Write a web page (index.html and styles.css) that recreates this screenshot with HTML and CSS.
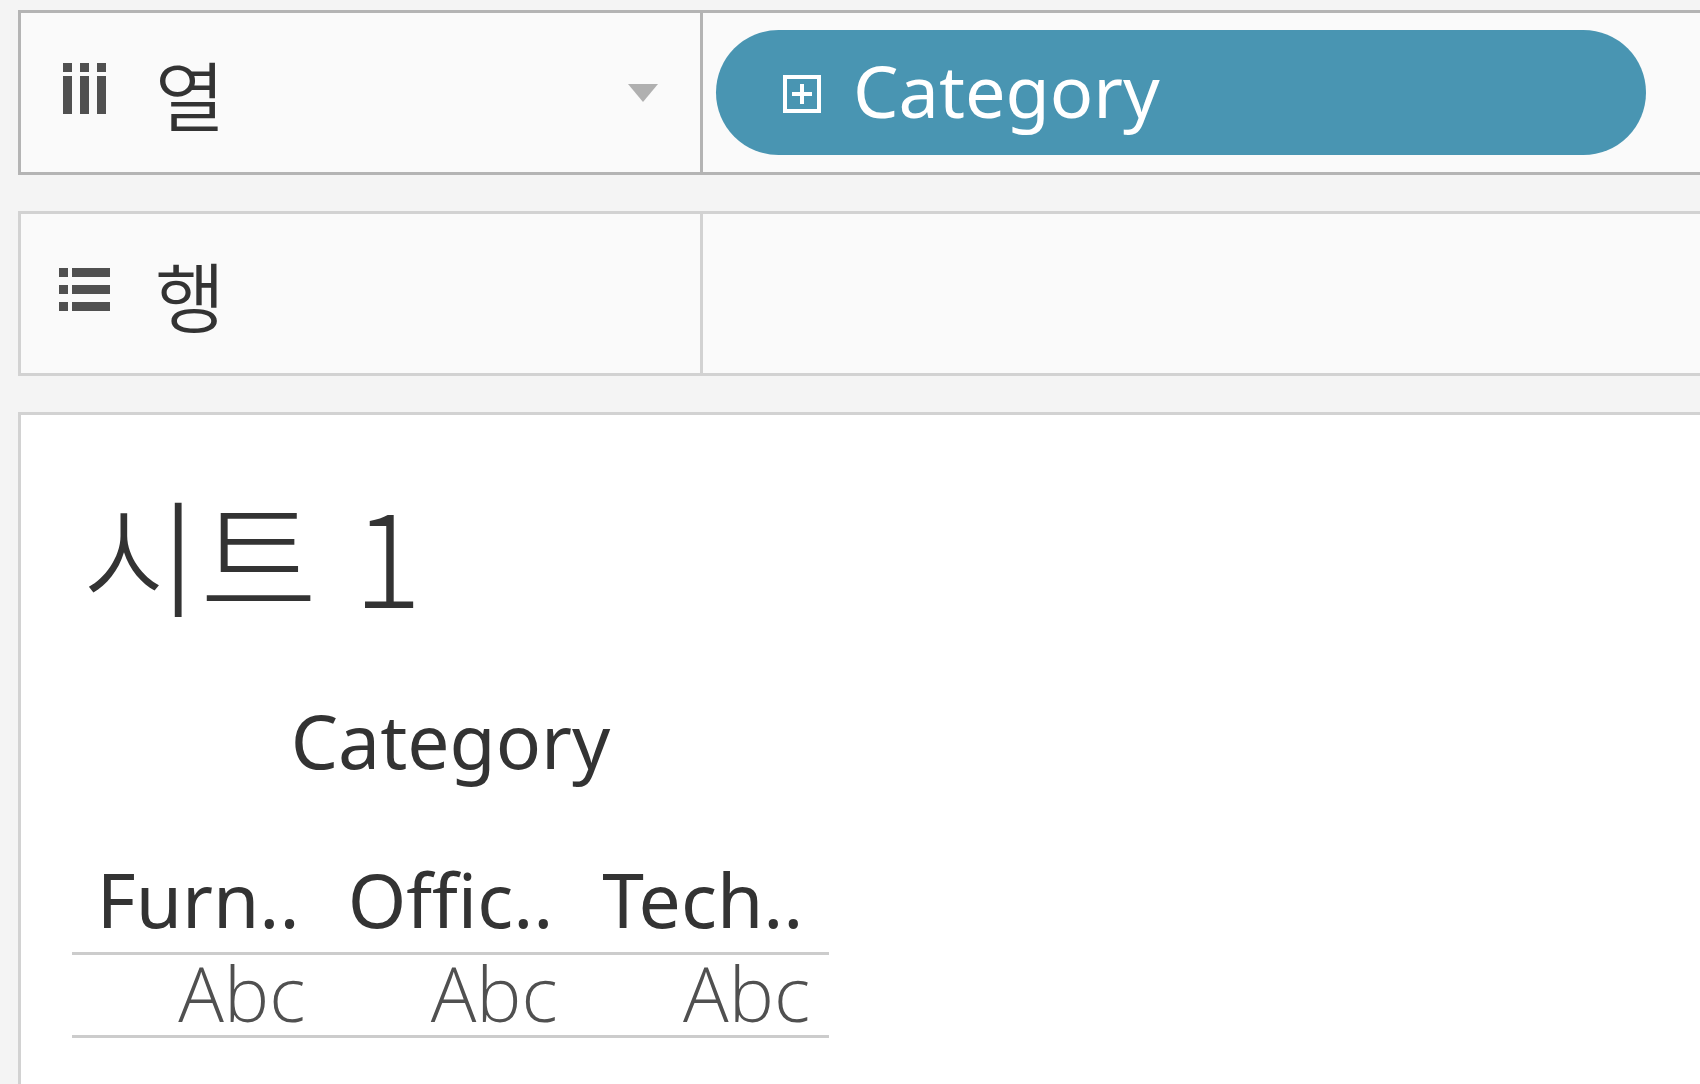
FILE: index.html
```html
<!DOCTYPE html>
<html lang="ko">
<head>
<meta charset="utf-8">
<meta name="viewport" content="width=device-width, initial-scale=1">
<title>시트 1</title>
<link rel="stylesheet" href="styles.css">
</head>
<body>
<main class="workspace">
  <section class="shelf shelf-active" aria-labelledby="columns-label">
    <header class="shelf-head">
      <svg class="shelf-icon" viewBox="0 0 51 51" aria-hidden="true">
        <path d="M4 0h9v9H4zM21 0h9v9h-9zM38 0h9v9h-9zM4 13h9v38H4zM21 13h9v38h-9zM38 13h9v38h-9z"/>
      </svg>
      <h2 class="shelf-label" id="columns-label">열</h2>
      <button class="shelf-menu" type="button" aria-label="열 메뉴">
        <svg class="caret" viewBox="0 0 30 18" aria-hidden="true"><path d="M0 0h30L15 18z"/></svg>
      </button>
    </header>
    <div class="shelf-body">
      <button class="pill" type="button">
        <svg class="pill-icon" viewBox="0 0 38 38" aria-hidden="true">
          <path d="M2 2h34v34H2zM9 19h20M19 9v20"/>
        </svg>
        <span class="pill-text">Category</span>
      </button>
    </div>
  </section>

  <section class="shelf" aria-labelledby="rows-label">
    <header class="shelf-head">
      <svg class="shelf-icon" viewBox="0 0 51 51" aria-hidden="true">
        <path d="M0 4h9v9H0zM0 21h9v9H0zM0 38h9v9H0zM13 4h38v9H13zM13 21h38v9H13zM13 38h38v9H13z"/>
      </svg>
      <h2 class="shelf-label" id="rows-label">행</h2>
    </header>
    <div class="shelf-body"></div>
  </section>

  <section class="sheet">
    <h1 class="sheet-title">시트 1</h1>
    <table class="view">
      <thead>
        <tr class="field-row"><th colspan="3" scope="colgroup">Category</th></tr>
        <tr class="member-row"><th scope="col">Furn..</th><th scope="col">Offic..</th><th scope="col">Tech..</th></tr>
      </thead>
      <tbody>
        <tr><td>Abc</td><td>Abc</td><td>Abc</td></tr>
      </tbody>
    </table>
  </section>
</main>
</body>
</html>
```
FILE: styles.css
```css
* {
  box-sizing: border-box;
}

body {
  margin: 0;
  background: #f4f4f4;
  color: #333;
  font-family: "Noto Sans", "Noto Sans CJK KR", sans-serif;
  font-size: 75px;
  font-variant-ligatures: none;
}

h1,
h2 {
  margin: 0;
  font-family: "Noto Sans CJK KR", sans-serif;
}

button {
  border: 0;
  font: inherit;
}

.workspace {
  display: flex;
  flex-direction: column;
  gap: 36px;
  min-height: 100vh;
  padding: 10px 0 0 18px;
}

.shelf {
  display: flex;
  min-height: 165px;
  border: 3px solid #d2d2d2;
  border-right: 0;
  background: #fafafa;
}

.shelf-active {
  border-color: #b4b4b4;
}

.shelf-head {
  display: flex;
  flex: 0 0 682px;
  align-items: center;
  padding: 0 42px 0 38px;
  border-right: 3px solid #d2d2d2;
}

.shelf-active .shelf-head {
  border-color: #b4b4b4;
}

.shelf-icon {
  width: 51px;
  height: 51px;
  margin-bottom: 8px;
  fill: #505050;
}

.shelf-label {
  margin-left: 45px;
  font-size: 76px;
  font-weight: 350;
  line-height: 100px;
}

.shelf-menu {
  display: flex;
  margin-left: auto;
  padding: 0;
  background: none;
}

.caret {
  width: 30px;
  height: 18px;
  fill: #b0b0b0;
}

.shelf-body {
  display: flex;
  flex: 1;
  align-items: center;
  padding: 0 13px;
}

.pill {
  display: flex;
  flex: 0 1 930px;
  align-items: center;
  gap: 32px;
  height: 125px;
  padding: 2px 67px 0;
  border-radius: 63px;
  background: #4995b2;
  color: #fff;
  font-size: 72px;
  line-height: 100px;
}

.pill-icon {
  width: 38px;
  height: 38px;
  fill: none;
  stroke: #fff;
  stroke-width: 4px;
}

.pill-text {
  padding-bottom: 8px;
}

.sheet {
  flex: 1;
  padding: 58px 51px 0;
  border: solid #d2d2d2;
  border-width: 3px 0 0 3px;
  background: #fff;
}

.sheet-title {
  padding-left: 10px;
  font-size: 128px;
  font-weight: 300;
  line-height: 160px;
}

.view {
  width: 757px;
  table-layout: fixed;
  border-collapse: collapse;
}

.view th,
.view td {
  padding: 0;
  line-height: 80px;
}

.view th {
  font-weight: 400;
}

.field-row th {
  height: 214px;
}

.member-row th {
  height: 106px;
}

.view td {
  padding: 0 19px 4px 0;
  border: solid #ccc;
  border-width: 3px 0;
  color: #505050;
  font-family: "Open Sans", sans-serif;
  font-size: 76px;
  font-weight: 350;
  line-height: 76px;
  text-align: right;
}
```
